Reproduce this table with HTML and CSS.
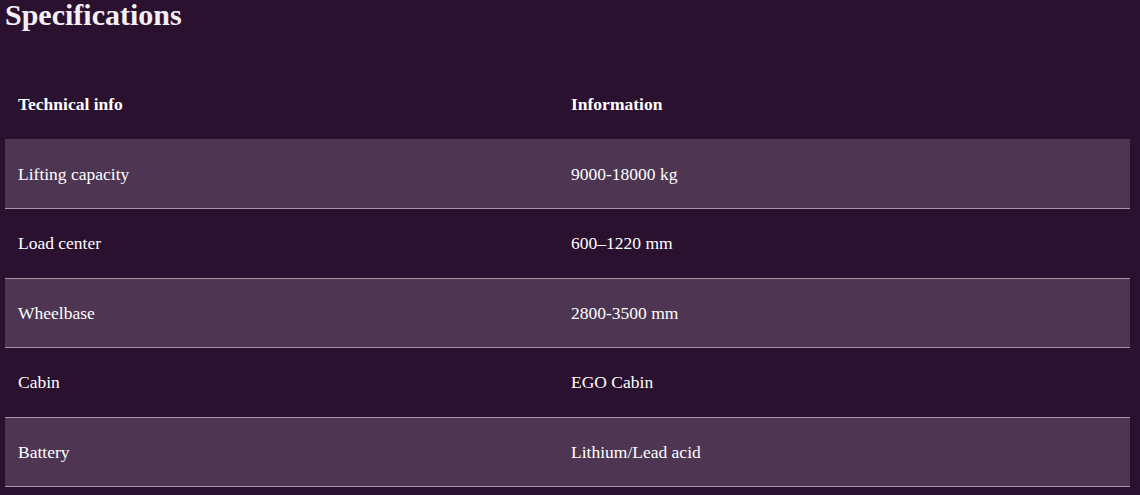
FILE: index.html
```html
<!DOCTYPE html>
<html>
<head>
<meta charset="utf-8">
<link rel="stylesheet" href="styles.css">
</head>
<body>
<div class="page">
  <h2 class="title">Specifications</h2>
  <table class="specs">
    <thead>
      <tr><th class="col1">Technical info</th><th>Information</th></tr>
    </thead>
    <tbody>
      <tr class="alt"><td>Lifting capacity</td><td>9000-18000 kg</td></tr>
      <tr><td>Load center</td><td>600–1220 mm</td></tr>
      <tr class="alt"><td>Wheelbase</td><td>2800-3500 mm</td></tr>
      <tr><td>Cabin</td><td>EGO Cabin</td></tr>
      <tr class="alt"><td>Battery</td><td>Lithium/Lead acid</td></tr>
    </tbody>
  </table>
</div>
</body>
</html>
```

FILE: styles.css
```css
html, body {
  margin: 0;
  padding: 0;
  background: #2b1130;
}
body {
  font-family: "Liberation Serif", "Times New Roman", serif;
  color: #ffffff;
}
.page {
  padding: 0 10px 0 5px;
}
.title {
  margin: 0 0 40px 0;
  font-size: 30px;
  line-height: 1;
  font-weight: bold;
  color: #f4f0f6;
}
.specs {
  width: 1125px;
  border-collapse: collapse;
  table-layout: fixed;
  font-size: 17.5px;
}
.specs .col1 {
  width: 553px;
}
.specs th,
.specs td {
  text-align: left;
  padding: 24.3px 13px 24.25px;
  line-height: 20px;
  box-sizing: border-box;
}
.specs th {
  font-weight: bold;
  border-bottom: 1px solid transparent;
}
.specs td {
  border-bottom: 1px solid #a397a6;
}
.specs tr.alt td {
  background: #4e3652;
}
```
